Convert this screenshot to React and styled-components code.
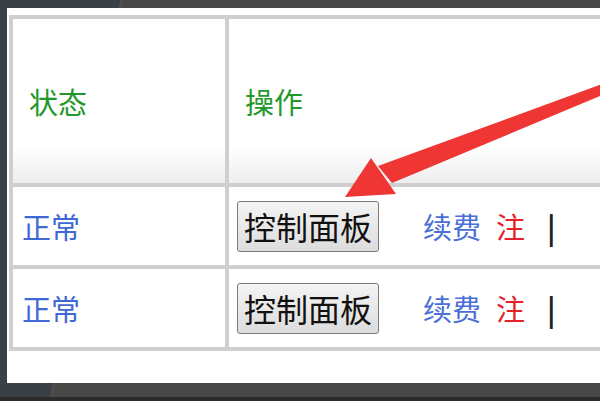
import React from "react";
import styled, { createGlobalStyle } from "styled-components";

const GlobalStyle = createGlobalStyle`
  html, body {
    margin: 0;
    padding: 0;
    background: #464646;
  }
  body {
    font-family: "Noto Sans CJK SC", "Noto Sans", sans-serif;
  }
`;

// dark frame around the white page
const Screen = styled.div`
  position: relative;
  width: 600px;
  height: 401px;
  overflow: hidden;
  box-sizing: border-box;
  padding: 8px 0 18px 7px;
  background:
    linear-gradient(to bottom, transparent 397px, #2b2b2b 397px),
    linear-gradient(100deg, #3a4045 0 118px, #505050 119px, #474747 122px);
`;

const Panel = styled.div`
  height: 100%;
  background: #ffffff;
  padding: 7px 0 0 2px;
  box-sizing: border-box;
  overflow: hidden;
`;

const Table = styled.table`
  border-collapse: separate;
  border-spacing: 0;
  border-top: 4px solid #cfcfcf;
  border-left: 4px solid #cfcfcf;
  width: 700px;
  table-layout: fixed;
`;

const HeadCell = styled.th`
  height: 164px;
  padding: 0 0 0 16px;
  text-align: left;
  font-weight: normal;
  font-size: 29px;
  color: #23982a;
  vertical-align: middle;
  border-right: 4px solid #cfcfcf;
  border-bottom: 4px solid #cfcfcf;
  background: linear-gradient(to bottom, #ffffff 0 128px, #ededed 164px);
  width: ${(p) => p.$width || "auto"};
`;

const Cell = styled.td`
  height: 78px;
  padding: 0 0 0 ${(p) => p.$pad || "9px"};
  vertical-align: middle;
  border-right: 4px solid #cfcfcf;
  border-bottom: 4px solid #cfcfcf;
  white-space: nowrap;
  overflow: hidden;
`;

const Status = styled.span`
  font-size: 29px;
  color: #3f68d4;
`;

const Actions = styled.div`
  display: flex;
  align-items: center;
`;

const PanelButton = styled.button`
  width: 142px;
  height: 51px;
  padding: 0;
  font-family: "Noto Sans CJK SC", sans-serif;
  font-size: 32px;
  line-height: 1;
  color: #111;
  background: linear-gradient(to bottom, #f4f4f4, #dcdcdc);
  border: 1px solid #7a7a7a;
  border-radius: 3px;
  margin-right: 44px;
`;

const Link = styled.span`
  font-size: 29px;
  color: ${(p) => p.$color};
  margin-right: ${(p) => p.$gap || "0"};
`;

const Divider = styled.span`
  font-size: 29px;
  font-weight: bold;
  color: #222;
`;

const Arrow = styled.svg`
  position: absolute;
  left: 0;
  top: 0;
  pointer-events: none;
`;

const rows = [1, 2];

const App = () => {
  return (
    <>
      <GlobalStyle />
      <Screen>
        <Panel>
          <Table>
            <thead>
              <tr>
                <HeadCell $width="196px">状态</HeadCell>
                <HeadCell>操作</HeadCell>
              </tr>
            </thead>
            <tbody>
              {rows.map((r) => (
                <tr key={r}>
                  <Cell>
                    <Status>正常</Status>
                  </Cell>
                  <Cell $pad="8px">
                    <Actions>
                      <PanelButton>控制面板</PanelButton>
                      <Link $color="#4a6fd6" $gap="15px">续费</Link>
                      <Link $color="#e5202a" $gap="22px">注</Link>
                      <Divider>|</Divider>
                    </Actions>
                  </Cell>
                </tr>
              ))}
            </tbody>
          </Table>
        </Panel>
        {/* red annotation arrow */}
        <Arrow width="600" height="401" viewBox="0 0 600 401">
          <polygon
            points="605,83 378,166 392,183 605,94"
            fill="#f03535"
          />
          <polygon points="345,197 371,158 396,194" fill="#f03535" />
        </Arrow>
      </Screen>
    </>
  );
};

export default App;
